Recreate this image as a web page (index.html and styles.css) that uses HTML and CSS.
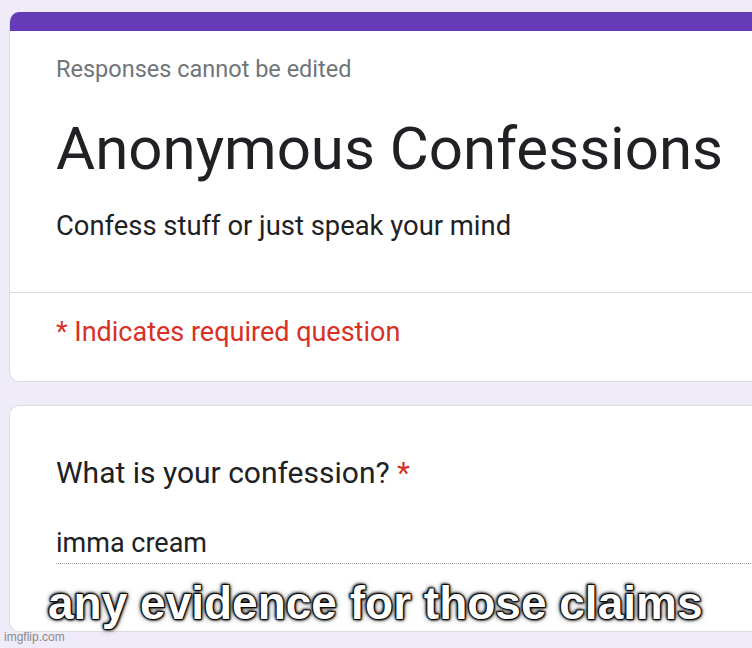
FILE: index.html
```html
<!DOCTYPE html>
<html>
<head>
<meta charset="utf-8">
<link rel="stylesheet" href="styles.css">
</head>
<body>
<div class="page">
  <div class="card head">
    <div class="bar"></div>
    <div class="head-body">
      <div class="note">Responses cannot be edited</div>
      <div class="title">Anonymous Confessions</div>
      <div class="desc">Confess stuff or just speak your mind</div>
    </div>
    <div class="divider"></div>
    <div class="req">* Indicates required question</div>
  </div>
  <div class="card q">
    <div class="question">What is your confession? <span class="star">*</span></div>
    <div class="answer">imma cream</div>
  </div>
</div>
<div class="caption">any evidence for those claims</div>
<div class="watermark">imgflip.com</div>
</body>
</html>
```
FILE: styles.css
```css
html, body {
  margin: 0;
  padding: 0;
}
body {
  width: 752px;
  height: 648px;
  overflow: hidden;
  background: #efebf8;
  font-family: Roboto, "Liberation Sans", sans-serif;
  position: relative;
}
.page {
  padding: 12px 0 0 9px;
  display: flex;
  flex-direction: column;
  gap: 23px;
}
.card {
  background: #fff;
  border: 1px solid #dadce0;
  border-right: none;
  border-radius: 10px 0 0 10px;
  width: 760px;
  box-sizing: border-box;
}
.head {
  border-top: none;
  overflow: hidden;
  height: 370px;
}
.bar {
  height: 19px;
  background: #673ab7;
}
.head-body {
  padding: 23px 0 0 46px;
}
.note {
  font-size: 23.5px;
  color: #70757a;
  line-height: 30px;
}
.title {
  font-size: 60px;
  color: #202124;
  line-height: 70px;
  margin-top: 30px;
}
.desc {
  font-size: 27.4px;
  color: #202124;
  line-height: 32px;
  margin-top: 26px;
}
.divider {
  border-top: 1px solid #dadce0;
  margin-top: 50px;
}
.req {
  padding: 23px 0 0 46px;
  font-size: 27px;
  color: #d93025;
  line-height: 32px;
}
.q {
  height: 227px;
  padding: 49px 0 0 46px;
}
.question {
  font-size: 30px;
  color: #202124;
  line-height: 36px;
}
.star {
  color: #d93025;
}
.answer {
  margin-top: 36px;
  font-size: 27px;
  color: #202124;
  line-height: 32px;
  padding-bottom: 4px;
  border-bottom: 1px dotted #999;
}
.caption {
  position: absolute;
  left: 48px;
  top: 577px;
  font-family: "Liberation Sans", Arial, sans-serif;
  font-weight: bold;
  font-size: 46px;
  line-height: 1.15;
  color: #fff;
  -webkit-text-stroke: 1.5px #000;
  paint-order: stroke fill;
  text-shadow: 0 0 2px #000, 0 0 3px #000, 1px 1px 3px #000, -1px -1px 3px #000, 0 0 6px rgba(0,0,0,0.6);
}
.watermark {
  position: absolute;
  left: 4px;
  top: 630px;
  font-family: "Liberation Sans", Arial, sans-serif;
  font-size: 12px;
  color: #8a8a8a;
}
```
